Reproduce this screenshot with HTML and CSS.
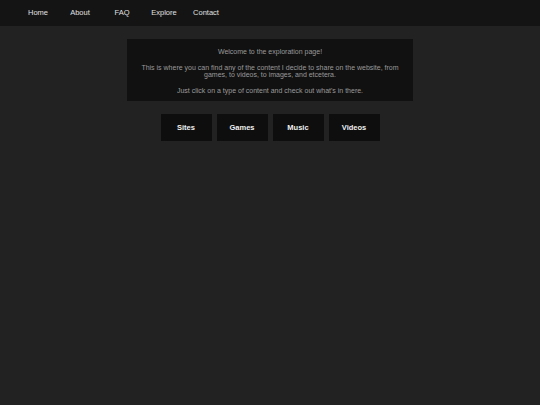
FILE: index.html
```html
<!DOCTYPE html>
<html>
<head>
<meta charset="utf-8">
<link rel="stylesheet" href="styles.css">
</head>
<body>
<nav class="nav">
  <a class="nav-item" href="#">Home</a>
  <a class="nav-item" href="#">About</a>
  <a class="nav-item" href="#">FAQ</a>
  <a class="nav-item" href="#">Explore</a>
  <a class="nav-item" href="#">Contact</a>
</nav>
<main class="main">
  <section class="panel">
    <p>Welcome to the exploration page!</p>
    <p>This is where you can find any of the content I decide to share on the website, from games, to videos, to images, and etcetera.</p>
    <p>Just click on a type of content and check out what's in there.</p>
  </section>
  <div class="buttons">
    <a class="btn" href="#">Sites</a>
    <a class="btn" href="#">Games</a>
    <a class="btn" href="#">Music</a>
    <a class="btn" href="#">Videos</a>
  </div>
</main>
</body>
</html>
```
FILE: styles.css
```css
html, body {
  margin: 0;
  padding: 0;
}
body {
  background: #222222;
  font-family: "Liberation Sans", Arial, sans-serif;
  min-height: 405px;
}
.nav {
  display: flex;
  height: 26px;
  background: #141414;
  padding-left: 17px;
  box-sizing: border-box;
  padding-bottom: 2px;
  align-items: center;
}
.nav-item {
  width: 42px;
  text-align: center;
  color: #e0e0e0;
  font-size: 7.5px;
  text-decoration: none;
}
.main {
  display: flex;
  flex-direction: column;
  align-items: center;
  padding-top: 13px;
}
.panel {
  width: 286px;
  box-sizing: border-box;
  background: #111111;
  padding: 5px 12px 3px;
  text-align: center;
  color: #9a9a9a;
  font-size: 7px;
  line-height: 7.5px;
}
.panel p {
  margin: 4px 0 8px;
}
.panel p:last-child {
  margin-bottom: 4px;
}
.buttons {
  display: flex;
  gap: 5px;
  margin-top: 13px;
}
.btn {
  width: 51px;
  height: 27px;
  background: #0e0e0e;
  color: #f0f0f0;
  font-weight: bold;
  font-size: 7.5px;
  text-decoration: none;
  display: flex;
  align-items: center;
  justify-content: center;
}
```
